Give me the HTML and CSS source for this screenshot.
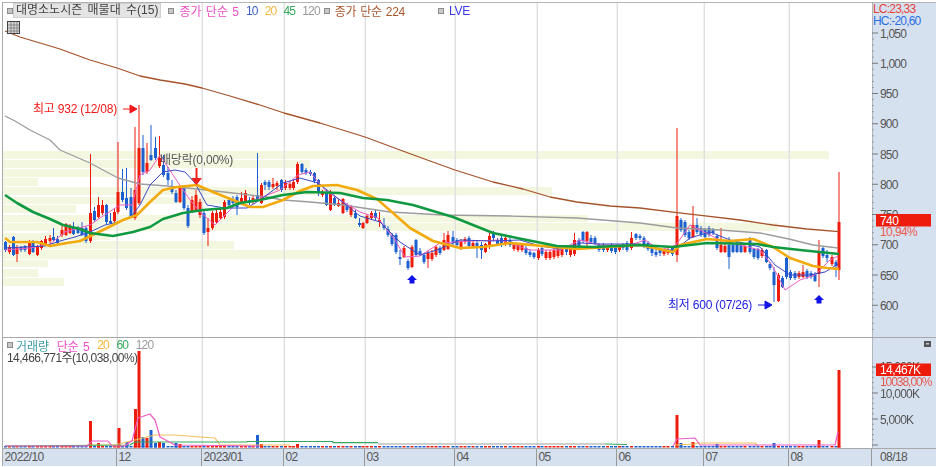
FILE: index.html
```html
<!DOCTYPE html>
<html lang="ko">
<head>
    <meta charset="UTF-8">
    <title>대명소노시즌 차트</title>
    <link rel="stylesheet" href="styles.css">
</head>
<body>

    <div class="frame">

        <!-- Price pane -->
        <div class="pane price-pane">
            <div class="plot">
                <svg id="price-chart" class="canvas" viewBox="3 3 869 334"></svg>
                <div class="legend">
                    <span class="marker first-marker"></span>
                    <span class="title">대명소노시즌 매물대 수(15)</span>
                    <span class="marker"></span>
                    <span class="pink">종가 단순 5</span>
                    <span class="num blue">10</span>
                    <span class="num orange">20</span>
                    <span class="num green">45</span>
                    <span class="num gray before-marker">120</span>
                    <span class="marker"></span>
                    <span class="brown">종가 단순 224</span>
                    <span class="marker lve-gap"></span>
                    <span class="indigo">LVE</span>
                </div>
                <svg class="table-btn" viewBox="0 0 13 13">
                    <rect x="0.5" y="0.5" width="12" height="12" fill="#d8d8d8" stroke="#444"/>
                    <path d="M1 4h11M1 7h11M1 10h11M4 1v11M7 1v11M10 1v11" stroke="#777" stroke-width="0.8" fill="none"/>
                </svg>
            </div>
            <svg id="price-axis" class="axis" viewBox="872 3 64 334"></svg>
        </div>

        <!-- Volume pane -->
        <div class="pane volume-pane">
            <div class="plot">
                <svg id="volume-chart" class="canvas" viewBox="3 338 869 110"></svg>
                <div class="legend volume-legend">
                    <span class="marker first-marker"></span>
                    <span class="teal">거래량</span>
                    <span class="pink">단순 5</span>
                    <span class="num orange">20</span>
                    <span class="num green">60</span>
                    <span class="num gray">120</span>
                </div>
                <div class="volume-total">14,466,771주(10,038,00%)</div>
            </div>
            <svg id="volume-axis" class="axis" viewBox="872 338 64 110"></svg>
        </div>

        <!-- Date axis -->
        <div class="dates">
            <div class="month" style="width: 114px">2022/10</div>
            <div class="month" style="width: 85px">12</div>
            <div class="month" style="width: 82px">2023/01</div>
            <div class="month" style="width: 81px">02</div>
            <div class="month" style="width: 90px">03</div>
            <div class="month" style="width: 82px">04</div>
            <div class="month" style="width: 80px">05</div>
            <div class="month" style="width: 87px">06</div>
            <div class="month" style="width: 85px">07</div>
            <div class="month" style="width: 83px">08</div>
            <div class="month last-date">08/18</div>
        </div>

    </div>

    <script src="chart.js"></script>

</body>
</html>
```

FILE: styles.css
```css
body {
    margin: 0;
    background-color: #fff;
    font-family: "Liberation Sans", "Noto Sans CJK KR", sans-serif;
    font-size: 12px;
    overflow: hidden;
}

/* The source capture is slightly soft */
.frame {
    margin: 2px 0 0 2px;
    width: 934px;
    height: 463px;
    border-top: 1px solid #b4b4b4;
    border-left: 1px solid #a8a8a8;
    display: flex;
    flex-direction: column;
    filter: blur(0.3px);
}

.pane {
    display: flex;
}

.price-pane {
    height: 334px;
    border-bottom: 1px solid #a8a8a8;
}

.volume-pane {
    height: 110px;
}

.plot {
    position: relative;
    width: 869px;
}

.canvas {
    display: block;
    width: 869px;
    height: 100%;
}

.axis {
    display: block;
    width: 64px;
    height: 100%;
    background-color: #d6e1ef;
}

/* Legend rows sit on top of the chart */
.legend {
    position: absolute;
    top: 0;
    left: 4px;
    height: 15px;
    display: flex;
    align-items: center;
    gap: 7px;
    word-spacing: 1px;
}

.volume-legend {
    gap: 7.5px;
    height: 14px;
}

.marker {
    width: 4px;
    height: 4px;
    border: 1px solid #8c8c8c;
    background-color: #c8c8c8;
    margin-right: -2px;
}

.first-marker {
    margin-right: -7px;
}

.volume-legend .first-marker {
    margin-right: -4.5px;
}

.title {
    background-color: #e4e4e4;
    border: 1px solid #d0d0d0;
    color: #444;
    padding: 0 2px;
    line-height: 13px;
    word-spacing: 2px;
}

.before-marker {
    margin-right: -3px;
}

.lve-gap {
    margin-left: 26px;
}

.num {
    letter-spacing: -0.8px;
}

.pink { color: #ea4fc8; }
.blue { color: #3b5fc8; }
.orange { color: #f4b63c; }
.green { color: #35a95c; }
.gray { color: #9a9a9a; }
.brown { color: #a8562c; letter-spacing: -0.3px; }
.indigo { color: #3a3ae8; letter-spacing: -0.3px; }
.teal { color: #3d9ca6; }

.table-btn {
    position: absolute;
    top: 18px;
    left: 4px;
    width: 13px;
    height: 13px;
}

.volume-total {
    position: absolute;
    top: 13px;
    left: 4px;
    color: #444;
    letter-spacing: -0.55px;
    line-height: 14px;
}

.dates {
    display: flex;
    height: 17px;
    border-top: 1px solid #a8a8a8;
    border-bottom: 1px solid #a8a8a8;
    background-color: #d6e1ef;
    color: #555;
    letter-spacing: -0.6px;
}

.month {
    box-sizing: border-box;
    padding-left: 1.5px;
    border-right: 1px solid #999;
    line-height: 17px;
    white-space: nowrap;
}

.last-date {
    border-right: none;
    padding-left: 8px;
}

/* SVG text */
.tick-label {
    font-size: 12px;
    fill: #555;
    letter-spacing: -0.8px;
}

.note {
    font-size: 12px;
    letter-spacing: -0.2px;
}

.note-red { fill: #f01818; }
.note-blue { fill: #2020e0; }
.note-gray { fill: #555; }

.tag-text {
    font-size: 12px;
    fill: #fff;
    letter-spacing: -0.6px;
}

.tag-sub {
    font-size: 12px;
    fill: #e85a50;
    letter-spacing: -0.6px;
}

.tag-sub-long {
    letter-spacing: -1.05px;
}

.lc { fill: #e8433a; }
.hc { fill: #2a6fe0; }
```

FILE: chart.js
```js
const SVG_NS = 'http://www.w3.org/2000/svg';

const RED = '#ee1c0c';
const BLUE = '#1d60cf';

// Month gridlines
const gridX = [117, 202, 284, 365, 455, 537, 617, 704, 789];

// Pale price-by-volume rows: top, bottom, right edge
const bands = [
    [151, 159, 829], [160, 168, 310], [169, 177, 118], [178, 186, 38],
    [187, 195, 552], [197, 204, 240], [205, 213, 76], [215, 222, 588],
    [223, 231, 778], [233, 240, 110], [241, 249, 234], [250, 259, 320],
    [260, 267, 48], [269, 277, 38], [278, 286, 64]
];

// Candles: colour, x, body top, body bottom, high, low (page pixels)
const candles = [
    ['b',5.5,242,250,241,252], ['r',9.5,247,252,245,254], ['b',13.5,237,255,236,256], ['r',17,248,254,245,262],
    ['b',21,247,250,246,252], ['b',25,246,250,245,252], ['r',29.5,241,254,240,255], ['b',33,241,252,240,253],
    ['r',37.5,246,255,245,256], ['r',41.5,241,248,240,250], ['r',45.5,239,245,236,246], ['r',50,238,241,235,243],
    ['b',53.5,237,240,228,241], ['b',57.5,239,243,236,245], ['r',62,230,235,225,237], ['r',66,224,235,223,236],
    ['r',70,227,233,224,234], ['b',73.5,227,234,222,235], ['b',78,228,233,226,234], ['b',82,228,235,222,236],
    ['b',86,228,241,226,243], ['r',90.5,213,241,154,243], ['b',94.5,211,220,207,222], ['r',98.5,205,217,197,218],
    ['r',102.5,205,213,200,215], ['b',106.5,205,222,204,224], ['b',110.5,221,223,213,224], ['r',114.5,212,221,208,222],
    ['r',118,192,212,142,214], ['b',122.5,192,200,169,202], ['b',126.5,198,208,168,210], ['b',131,197,217,188,218],
    ['r',135,190,218,127,220], ['r',139,148,203,105,205], ['b',143,148,172,135,175], ['r',147,163,172,143,174],
    ['b',151,155,160,125,161], ['b',155.5,148,158,137,160], ['r',159.5,158,166,136,168], ['b',163.5,165,175,155,177],
    ['b',168,173,180,167,185], ['b',172,187,192,180,194], ['b',176,193,202,190,203], ['r',180,188,202,186,203],
    ['b',184,188,208,186,210], ['b',188,208,226,205,228], ['r',192,200,212,196,213], ['r',196,195,210,190,212],
    ['r',200,202,215,199,218], ['b',204,213,233,211,235], ['r',208,228,232,218,246], ['r',212.5,213,228,211,230],
    ['r',216.5,213,222,210,224], ['r',220.5,212,218,208,220], ['r',224.5,202,217,200,219], ['b',229,200,205,198,207],
    ['b',233,200,203,196,205], ['b',237,197,207,195,215], ['r',241.5,198,203,192,205], ['r',245.5,193,202,190,203],
    ['b',249.5,200,203,197,205], ['r',253,198,202,195,204], ['b',257.5,195,200,153,201], ['r',261.5,185,203,183,204],
    ['b',265,182,185,180,190], ['b',269,182,187,180,190], ['r',273,184,187,178,189], ['r',277,183,186,181,190],
    ['b',281.5,180,190,179,192], ['r',285.5,183,188,180,190], ['r',290,184,188,182,190], ['r',293.5,182,188,180,190],
    ['r',297.5,164,182,162,184], ['b',302,164,172,163,174], ['b',306,170,173,168,175], ['b',310.5,172,174,170,176],
    ['b',314.5,173,181,172,183], ['b',318.5,180,193,179,196], ['r',322.5,192,195,190,197], ['b',326.5,192,205,190,206],
    ['r',330.5,192,210,190,211], ['b',334.5,198,205,196,206], ['r',338.5,203,206,199,207], ['r',343,199,213,198,214],
    ['b',347,205,210,203,212], ['r',351,207,215,205,217], ['b',355.5,213,218,210,219], ['b',359.5,223,225,218,227],
    ['r',363,223,228,222,229], ['r',367,216,223,214,224], ['r',371.5,213,218,211,220], ['b',375.5,213,218,210,220],
    ['r',379.5,220,222,212,227], ['b',384,225,228,218,230], ['b',388,229,235,226,237], ['b',392,235,244,233,246],
    ['b',396,235,252,233,254], ['b',400,257,259,250,265], ['r',404,248,257,246,258], ['b',408,261,268,259,270],
    ['r',412,247,267,245,268], ['b',416,240,255,239,257], ['b',420,251,254,248,256], ['b',424,255,262,253,264],
    ['r',428,253,259,250,268], ['r',432,253,259,250,261], ['r',436,247,255,245,257], ['b',440,248,253,246,255],
    ['r',444,240,250,233,251], ['r',448,235,249,231,250], ['b',453,237,242,231,245], ['b',457,240,245,238,247],
    ['r',461,241,249,239,250], ['r',465,239,242,237,244], ['b',469,238,246,236,247], ['r',473,243,246,241,248],
    ['b',477,243,247,240,258], ['b',481.5,245,250,242,259], ['r',485.5,244,252,243,253], ['r',489.5,236,247,232,249],
    ['b',493.5,233,238,231,241], ['b',497.5,240,244,238,246], ['b',501.5,238,245,236,247], ['r',505.5,238,244,236,246],
    ['b',510,240,245,238,247], ['r',514,245,249,243,251], ['r',518,245,250,243,252], ['r',522,245,250,243,252],
    ['b',526,248,253,246,255], ['b',530,252,255,249,257], ['b',534,253,257,252,259], ['r',538.5,250,258,248,260],
    ['b',542,248,254,246,256], ['r',546,252,258,250,260], ['r',550,252,258,250,260], ['r',554,250,257,248,259],
    ['r',558,249,256,247,258], ['r',562,249,255,247,257], ['b',566.5,249,252,247,255], ['r',570.5,249,255,247,257],
    ['r',574.5,240,254,233,256], ['b',579,240,246,238,248], ['b',583,232,241,231,243], ['r',587,232,241,231,246],
    ['b',591,238,242,235,244], ['b',595,238,243,236,245], ['b',599,245,250,243,252], ['b',603.5,245,250,243,252],
    ['r',607.5,247,250,245,252], ['b',611.5,245,251,243,253], ['b',615.5,247,252,245,254], ['r',619.5,247,250,245,252],
    ['b',623,245,248,243,250], ['b',627,243,250,241,252], ['r',631.5,238,248,232,250], ['b',636,234,238,233,240],
    ['b',640,236,238,234,240], ['b',644,238,246,236,248], ['b',648,243,249,241,251], ['b',652,247,253,245,256],
    ['b',656,252,255,249,257], ['b',660,250,253,248,256], ['r',664,251,254,249,256], ['r',668,250,253,248,255],
    ['b',672.5,248,254,246,256], ['r',677,216,255,128,262], ['b',681,220,230,218,232], ['b',685,222,235,220,237],
    ['b',689,232,238,230,240], ['r',693,225,237,206,238], ['b',697,225,232,218,234], ['b',701,228,235,226,237],
    ['b',705,230,237,228,238], ['b',709,228,235,226,237], ['b',713,230,233,228,235], ['b',717,236,248,234,250],
    ['r',721,245,252,228,253], ['r',725,246,252,244,253], ['b',729,245,257,237,269], ['b',733,245,252,243,253],
    ['b',737,244,252,242,253], ['b',741,245,252,243,253], ['r',745,246,252,244,253], ['b',750,238,252,237,254],
    ['b',754,249,257,248,259], ['b',758,249,258,248,260], ['r',762,250,256,248,258], ['b',766.5,250,262,249,263],
    ['b',770,264,268,262,270], ['b',774,272,285,267,302], ['r',778.5,275,301,273,302], ['b',782.5,278,287,276,288],
    ['b',786.5,258,277,257,279], ['b',790.5,272,278,270,280], ['b',795,273,278,271,280], ['r',799,273,277,271,279],
    ['r',803,272,277,265,278], ['b',807,271,277,269,279], ['b',811,273,277,271,279], ['b',815,274,281,272,282],
    ['r',819,253,274,240,287], ['b',823,248,256,247,258], ['b',827,255,258,250,262], ['r',832,257,264,255,266],
    ['b',836,262,266,260,277], ['r',839,222,270,172,280]
];

// Moving averages: colour, stroke width, points
const priceLines = [
    ['#a5532b', 1.3, '5,31 20,37 60,49 90,60 117,68 140,76 160,80 185,84 202,88 230,96 260,105 284,113 320,123 365,137 400,150 430,161 455,170 493,182 523,189 550,197 577,202 610,206 640,208 677,212.7 703,215.7 740,220 773,225 807,229 839,231.7'],
    ['#9c9c9c', 1.3, '5,116 15,121 30,130 50,140 60,150 90,163 118,178 140,184 167,186 197,189 233,193 267,197 283,200 310,202 343,205 390,212 443,215 510,216 577,218 640,223 677,228 720,230 760,233 789,239 813,245 838,248'],
    ['#ee5cc4', 1, '5,250 30,248 50,244 65,232 90,225 100,218 120,205 132,205 140,175 150,170 160,155 175,178 190,200 200,212 215,225 235,205 255,200 280,190 298,175 310,172 325,190 340,200 360,212 378,218 395,240 405,257 420,256 440,243 470,241 500,240 530,250 560,250 580,240 600,245 630,245 645,240 660,250 676,245 690,225 720,240 760,250 772,265 785,290 800,280 815,275 830,260 838,256'],
    ['#3a48c4', 1, '5,248 25,247 45,246 60,241 75,237 90,232 105,225 118,222 130,218 140,205 150,185 163,172 175,170 185,172 195,183 207,205 225,208 247,208 260,200 283,183 300,178 318,183 340,200 360,216 380,222 400,242 420,255 437,250 460,240 490,241 520,240 540,246 560,249 580,243 600,244 640,244 660,250 675,250 690,238 710,232 730,240 760,247 775,265 790,275 810,275 825,272 838,264'],
    ['#f2aa0c', 2.6, '5,238 10,242 37,242 50,246 67,243 80,241 103,230 123,220 137,215 150,202 163,190 177,187 197,185 213,192 233,200 250,207 263,207 283,200 300,191 313,186 337,185 357,190 377,199 393,213 410,228 433,241 460,248 483,247 510,243 543,246 577,249 640,245 673,252 680,245 707,239 730,241 753,239 773,247 790,258 813,266 827,268 839,269'],
    ['#0f9a42', 2.6, '5,195 17,203 33,212 50,219 63,225 80,229 90,233 113,236 133,232 150,227 163,219 183,213 203,210 227,208 240,203 260,200 283,195 307,192 340,193 363,198 387,200 413,205 453,217 493,233 527,240 557,246 593,247 640,245 673,247 707,243 757,244 773,247 800,250 839,254']
];

// Volume bars: colour, x, top (baseline is y = 447)
const volumeBars = [
    ['r',90.5,421], ['r',98.5,443], ['r',119,428], ['b',127,442], ['r',135.5,409], ['r',139,351], ['b',143,437],
    ['r',147,438], ['b',151,430], ['b',155.5,443], ['r',159.5,442], ['b',163.5,443], ['b',176,443], ['r',180,444],
    ['b',257.5,435], ['r',261.5,444], ['r',297.5,444], ['r',677,415], ['b',681,443], ['r',693,442], ['b',717,444],
    ['b',774,443], ['r',819,440], ['r',839,370]
];

const volumeLines = [
    ['#f2c05c', 1.2, '87,445 115,445 135,440 155,435 175,435 200,437 215,438 220,445 290,445'],
    ['#f2c05c', 1.2, '675,445 695,444 698,443 755,443 758,446'],
    ['#34a860', 1.2, '5,446 130,445 135,442 247,442 247,441.5 333,441.5 333,442.7 378,442.7'],
    ['#a0a0a0', 1.2, '378,444 605,444'],
    ['#34a860', 1.2, '605,444 627,444.5'],
    ['#ee5cc4', 1.2, '5,446 87,446 92,441 108,441 112,446 125,446 130,442 132,441 138,418 150,414 155,420 160,437 175,445 260,446'],
    ['#ee5cc4', 1.2, '673,446 677,439 695,438 700,445 770,445 835,445 838,432']
];

function add(svg, tag, attrs, text) {
    const el = document.createElementNS(SVG_NS, tag);
    Object.keys(attrs).forEach(key => el.setAttribute(key, attrs[key]));
    if (text) el.textContent = text;
    svg.appendChild(el);
    return el;
}

function drawGrid(svg, top, bottom) {
    gridX.forEach(x => {
        add(svg, 'line', { x1: x + 0.3, x2: x + 0.3, y1: top, y2: bottom, stroke: '#e0e0e0', 'stroke-width': 1.5 });
    });
}

function drawLines(svg, lines) {
    lines.forEach(line => {
        add(svg, 'polyline', { points: line[2], fill: 'none', stroke: line[0], 'stroke-width': line[1], 'stroke-linejoin': 'round' });
    });
}

function drawPrice() {
    const svg = document.getElementById('price-chart');

    bands.forEach(b => {
        add(svg, 'rect', { x: 3, y: b[0], width: b[2] - 3, height: b[1] - b[0], fill: '#f4f7df' });
    });
    drawGrid(svg, 3, 337);

    candles.forEach(c => {
        const color = c[0] === 'r' ? RED : BLUE;
        add(svg, 'rect', { x: c[1] - 0.5, y: c[4], width: 1, height: c[5] - c[4], fill: color });
        add(svg, 'rect', { x: c[1] - 1.5, y: c[2], width: 3, height: c[3] - c[2], fill: color });
    });
    drawLines(svg, priceLines);

    // Highest and lowest price notes
    add(svg, 'text', { x: 33, y: 113, class: 'note note-red' }, '최고 932 (12/08)');
    add(svg, 'path', { d: 'M123 109h9M130 105l7 4-7 4z', stroke: '#f01818', fill: '#f01818' });
    add(svg, 'text', { x: 668, y: 309, class: 'note note-blue' }, '최저 600 (07/26)');
    add(svg, 'path', { d: 'M758 305h9M765 301l7 4-7 4z', stroke: '#1414e8', fill: '#1414e8' });

    // Ex-dividend marker
    add(svg, 'text', { x: 160, y: 164, class: 'note note-gray' }, '배당락(0,00%)');
    add(svg, 'path', { d: 'M195.5 168h2v10h-2zM191 178h11l-5.5 7z', fill: '#f02020' });

    // Up arrows under the lows
    [[412, 275], [819, 295]].forEach(p => {
        add(svg, 'path', { d: `M${p[0]} ${p[1]}l5 5h-2.5v3.5h-5v-3.500h-2.5z`, fill: '#1010e8' });
    });
}

function drawVolume() {
    const svg = document.getElementById('volume-chart');
    drawGrid(svg, 338, 448);

    // Every session leaves a small stub on the baseline
    candles.forEach(c => {
        add(svg, 'rect', { x: c[1] - 1.5, y: 446, width: 3, height: 1.5, fill: c[0] === 'r' ? RED : BLUE });
    });
    volumeBars.forEach(v => {
        add(svg, 'rect', { x: v[1] - 1.5, y: v[2], width: 3, height: 447.5 - v[2], fill: v[0] === 'r' ? RED : BLUE });
    });
    drawLines(svg, volumeLines);
}

function drawTicks(svg, from, to, step, major) {
    for (let i = 0; from + i * step <= to; i++) {
        const y = from + i * step;
        const long = i % major === 0;
        add(svg, 'line', { x1: 872, x2: long ? 878 : 874, y1: y, y2: y, stroke: long ? '#777' : '#999' });
    }
}

function drawPriceAxis() {
    const svg = document.getElementById('price-axis');
    add(svg, 'line', { x1: 871.5, x2: 871.5, y1: 3, y2: 337, stroke: '#8c8c8c', 'stroke-width': 2 });
    drawTicks(svg, 33, 335, 6.05, 5);

    const labels = ['1,050', '1,000', '950', '900', '850', '800', '750', '700', '650', '600'];
    labels.forEach((label, i) => {
        add(svg, 'text', { x: 880, y: 37.5 + i * 30.25, class: 'tick-label' }, label);
    });

    add(svg, 'text', { x: 873, y: 13, class: 'tick-label lc' }, 'LC:23,33');
    add(svg, 'text', { x: 873, y: 25, class: 'tick-label hc' }, 'HC:-20,60');

    // Last price tag
    add(svg, 'rect', { x: 876, y: 214, width: 55, height: 12.5, fill: RED });
    add(svg, 'text', { x: 880, y: 224.5, class: 'tag-text' }, '740');
    add(svg, 'text', { x: 880, y: 236, class: 'tag-sub' }, '10,94%');
}

function drawVolumeAxis() {
    const svg = document.getElementById('volume-axis');
    add(svg, 'line', { x1: 871.5, x2: 871.5, y1: 338, y2: 448, stroke: '#8c8c8c', 'stroke-width': 2 });
    drawTicks(svg, 367, 447, 5.2, 5);

    add(svg, 'text', { x: 880, y: 371, class: 'tick-label' }, '15,000K');
    add(svg, 'text', { x: 880, y: 397.5, class: 'tick-label' }, '10,000K');
    add(svg, 'text', { x: 880, y: 423.5, class: 'tick-label' }, '5,000K');

    // Last volume tag
    add(svg, 'rect', { x: 876, y: 363.5, width: 55, height: 12.5, fill: RED });
    add(svg, 'text', { x: 880, y: 374, class: 'tag-text' }, '14,467K');
    add(svg, 'text', { x: 880, y: 385.5, class: 'tag-sub tag-sub-long' }, '10038,00%');

    // Small panel button in the corner
    add(svg, 'rect', { x: 924, y: 341, width: 7, height: 6, fill: '#555' });
    add(svg, 'rect', { x: 926, y: 343, width: 3, height: 1.5, fill: '#ccc' });
}

drawPrice();
drawVolume();
drawPriceAxis();
drawVolumeAxis();
```
